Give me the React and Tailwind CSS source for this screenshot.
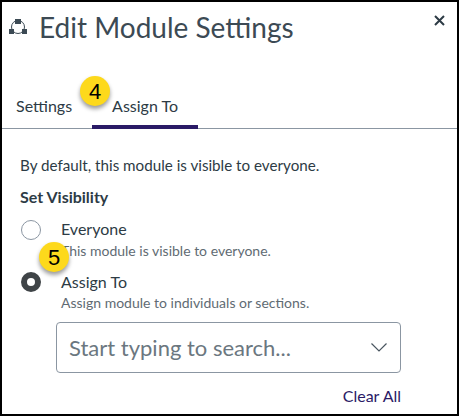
import React from 'react';

function ModuleIcon() {
    return (
        <svg width="20" height="20" viewBox="0 0 20 20" className="shrink-0 text-[#3c4a54]">
            <circle cx="9" cy="10" r="6.5" fill="none" stroke="currentColor" strokeWidth="1" />
            <rect x="6" y="2" width="6" height="5" fill="currentColor" />
            <rect x="0" y="12" width="5" height="5" fill="currentColor" />
            <rect x="13" y="12" width="5" height="5" fill="currentColor" />
        </svg>
    );
}

function Badge({ n, className }) {
    return (
        <div className={`absolute flex h-[30px] w-[30px] items-center justify-center rounded-full bg-[#fdd91c] text-[22px] text-black shadow-[0_3px_4px_rgba(0,0,0,0.4)] font-['Liberation_Sans',sans-serif] ${className}`}>
            {n}
        </div>
    );
}

export default function App() {
    return (
        <div className="relative h-[416px] w-[459px] overflow-hidden border-2 border-black bg-white font-['Lato',sans-serif] text-[#2d3b45]">
            {/* Header */}
            <div className="flex h-[52px] items-start pl-[7px] pr-[12px] pt-[6px]">
                <div className="mt-[9px]"><ModuleIcon /></div>
                <h1 className="ml-[10px] text-[28px] leading-[38px] text-[#3c4a54]">Edit Module Settings</h1>
                <svg width="11" height="11" viewBox="0 0 11 11" className="ml-auto mt-[7px] text-[#2d3b45]">
                    <path d="M1 1 L10 10 M10 1 L1 10" stroke="currentColor" strokeWidth="2" />
                </svg>
            </div>

            {/* Tabs */}
            <div className="mt-[39px] flex h-[36px] items-start border-b border-[#8b96a2] pl-[14px] text-[16px] leading-[24px]">
                <div className="pt-[1px]">Settings</div>
                <div className="ml-[20px] h-[36px] w-[106px] border-b-4 border-[#2a1a66] pl-[20px] pt-[1px]">Assign To</div>
            </div>

            {/* Body */}
            <div className="pl-[18px] pt-[25px]">
                <p className="text-[15.2px] leading-[22px]">By default, this module is visible to everyone.</p>
                <p className="mt-[10px] text-[16px] font-bold leading-[22px]">Set Visibility</p>

                <div className="mt-[10px] flex items-start">
                    <div className="ml-[1px] mt-[2px] h-[20px] w-[20px] rounded-full border border-[#8b96a2] bg-white" />
                    <div className="ml-[20px]">
                        <div className="text-[16px] leading-[22px]">Everyone</div>
                        <div className="mt-[2px] text-[14px] leading-[18px] text-[#5f6b73]">This module is visible to everyone.</div>
                    </div>
                </div>

                <div className="mt-[11px] flex items-start">
                    <div className="ml-[1px] mt-[1px] h-[20px] w-[20px] rounded-full border-[6px] border-[#3f4447] bg-white" />
                    <div className="ml-[20px]">
                        <div className="text-[16px] leading-[22px]">Assign To</div>
                        <div className="mt-[1px] text-[14px] leading-[18px] text-[#5f6b73]">Assign module to individuals or sections.</div>
                    </div>
                </div>

                <div className="ml-[36px] mt-[10px] flex h-[51px] w-[345px] items-center justify-between rounded-[4px] border border-[#8b96a2] pl-[12px] pr-[13px]">
                    <span className="text-[22px] text-[#6b7780]">Start typing to search...</span>
                    <svg width="16" height="9" viewBox="0 0 16 9" className="text-[#4a5660]">
                        <path d="M0.5 0.5 L8 8 L15.5 0.5" fill="none" stroke="currentColor" strokeWidth="1.2" />
                    </svg>
                </div>

                <div className="mt-[12px] w-[381px] text-right text-[16px] leading-[22px] text-[#2a1a66]">Clear All</div>
            </div>

            {/* Callouts */}
            <Badge n="4" className="left-[78px] top-[74px]" />
            <Badge n="5" className="left-[37px] top-[240px]" />
        </div>
    );
}
